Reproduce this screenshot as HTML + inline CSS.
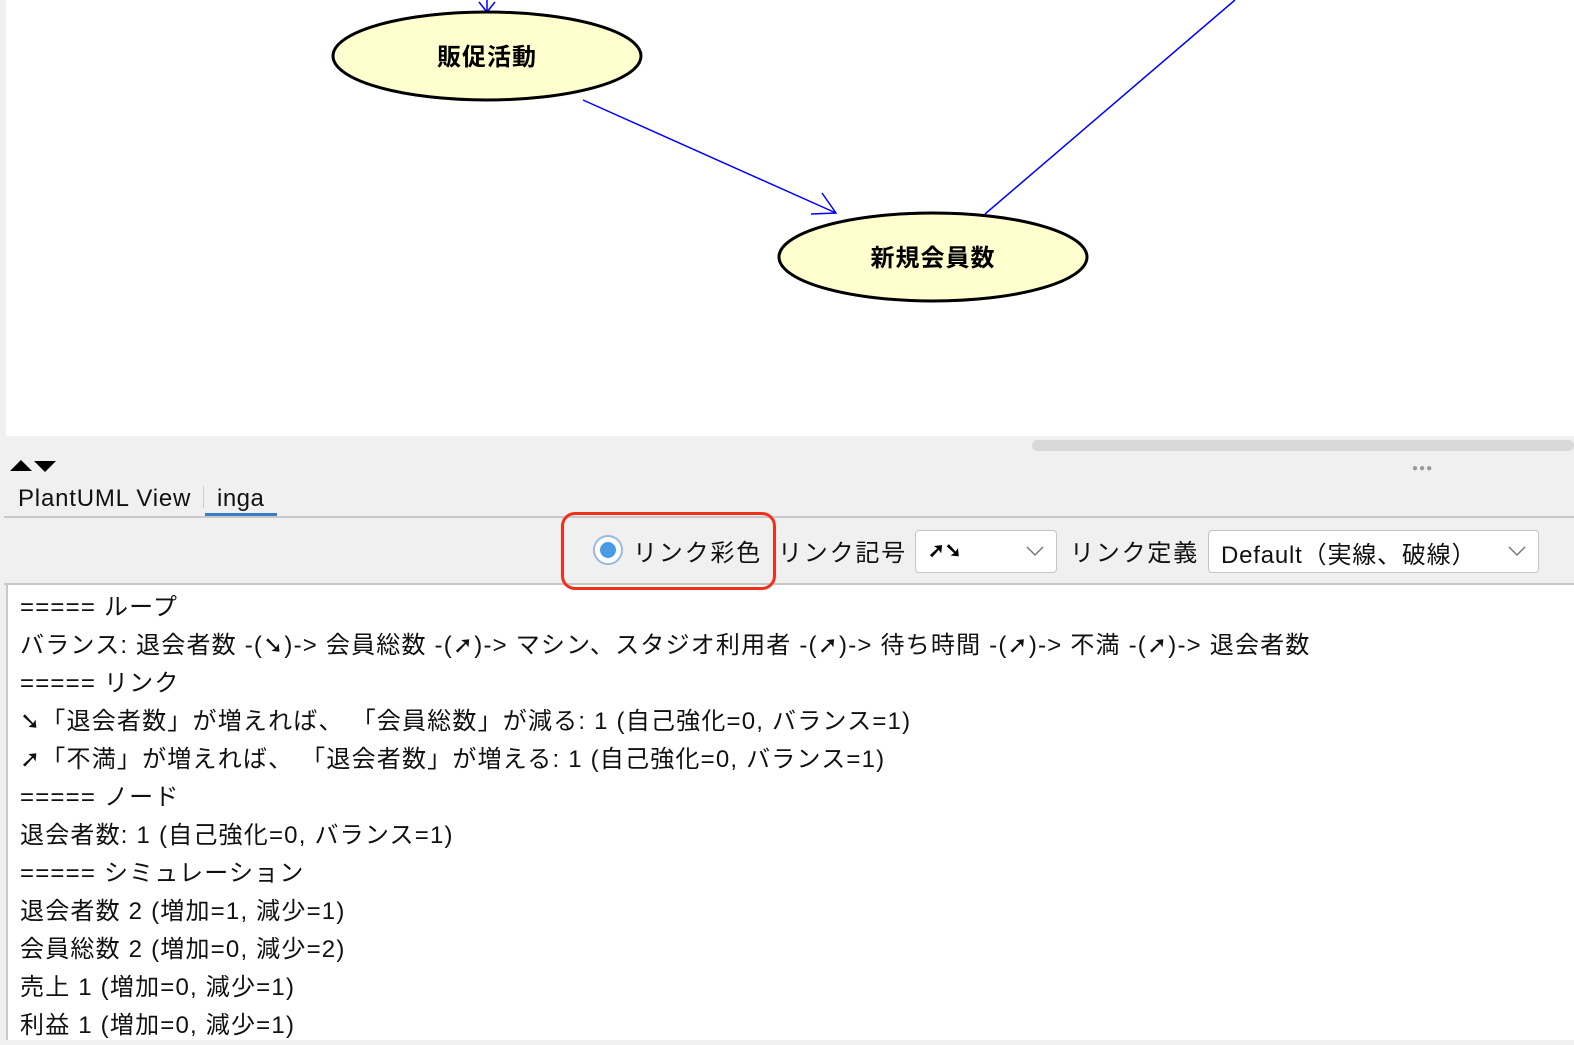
<!DOCTYPE html>
<html><head><meta charset="utf-8"><style>
body{margin:0;width:1574px;height:1040px;overflow:hidden;background:#f0f0f0;font-family:"Liberation Sans","Noto Sans CJK JP",sans-serif;position:relative}
.abs{position:absolute}
.txt{position:absolute;left:20px;font-size:24px;color:#111;white-space:nowrap;line-height:38px;letter-spacing:1.2px}
.lbl{letter-spacing:1.8px}
</style></head><body>
<div class="abs" style="left:6px;top:0;width:1568px;height:436px;background:#fff"></div>
<svg class="abs" style="left:0;top:0" width="1574" height="436">
<line x1="487" y1="0" x2="487" y2="12" stroke="#00f" stroke-width="1.5"/>
<path d="M479 2 L487 12 L495 2" fill="none" stroke="#00f" stroke-width="1.5"/>
<line x1="583" y1="100" x2="836" y2="213" stroke="#00f" stroke-width="1.5"/>
<path d="M822 193 L836 213 L811 214" fill="none" stroke="#00f" stroke-width="1.5"/>
<line x1="985" y1="214" x2="1235" y2="0" stroke="#00f" stroke-width="1.5"/>
<ellipse cx="487" cy="56" rx="154" ry="44" fill="#fefece" stroke="#000" stroke-width="3"/>
<text x="487" y="65" text-anchor="middle" font-size="24" font-weight="bold" letter-spacing="1" font-family="Liberation Sans,Noto Sans CJK JP,sans-serif">販促活動</text>
<ellipse cx="933" cy="257" rx="154" ry="44" fill="#fefece" stroke="#000" stroke-width="3"/>
<text x="933" y="266" text-anchor="middle" font-size="24" font-weight="bold" letter-spacing="1" font-family="Liberation Sans,Noto Sans CJK JP,sans-serif">新規会員数</text>
</svg>
<div class="abs" style="left:1032px;top:440px;width:542px;height:11px;border-radius:6px;background:#d9d9d9"></div>
<div class="abs" style="left:1412px;top:463px;font-size:10px;color:#999;letter-spacing:1px">●●●</div>
<svg class="abs" style="left:10px;top:460px" width="50" height="12"><path d="M0 11 L11 0 L22 11Z M24 1 L46 1 L35 12Z" fill="#000"/></svg>
<div class="abs" style="left:18px;top:485px;font-size:24px;color:#111;letter-spacing:0.8px">PlantUML View</div>
<div class="abs" style="left:203px;top:486px;width:1px;height:22px;background:#ccc"></div>
<div class="abs" style="left:217px;top:485px;font-size:24px;color:#111;letter-spacing:0.5px">inga</div>
<div class="abs" style="left:205px;top:513px;width:72px;height:5px;background:#3a7ec6"></div>
<div class="abs" style="left:4px;top:516px;width:1570px;height:2px;background:#c8c8c8"></div>
<div class="abs" style="left:593px;top:535px;width:30px;height:30px;border-radius:50%;background:#fff;border:2px solid #9ab8dc;box-sizing:border-box"></div>
<div class="abs" style="left:600px;top:542px;width:16px;height:16px;border-radius:50%;background:#4a9ae6"></div>
<div class="abs lbl" style="left:633px;top:533px;font-size:24px;color:#111">リンク彩色</div>
<div class="abs lbl" style="left:778px;top:533px;font-size:24px;color:#111">リンク記号</div>
<div class="abs" style="left:915px;top:530px;width:142px;height:43px;background:#fff;border:1px solid #c4c4c4;border-radius:4px;box-sizing:border-box"></div>
<div class="abs" style="left:928px;top:538px;font-size:20px;font-weight:bold">➚➘</div>
<svg class="abs" style="left:1026px;top:545px" width="18" height="12"><path d="M1 2 L9 10 L17 2" fill="none" stroke="#777" stroke-width="1.5"/></svg>
<div class="abs lbl" style="left:1070px;top:533px;font-size:24px;color:#111">リンク定義</div>
<div class="abs" style="left:1208px;top:530px;width:331px;height:43px;background:#fff;border:1px solid #c4c4c4;border-radius:4px;box-sizing:border-box"></div>
<div class="abs" style="left:1221px;top:535px;font-size:24px;color:#111;letter-spacing:0.8px">Default（実線、破線）</div>
<svg class="abs" style="left:1508px;top:545px" width="18" height="12"><path d="M1 2 L9 10 L17 2" fill="none" stroke="#777" stroke-width="1.5"/></svg>
<div class="abs" style="left:4px;top:583px;width:1570px;height:2px;background:#c8c8c8"></div>
<div class="abs" style="left:6px;top:585px;width:1568px;height:455px;background:#fff;border-left:2px solid #c8c8c8"></div>
<div class="abs" style="left:561px;top:512px;width:215px;height:78px;border:3px solid #f0301c;border-radius:14px;box-sizing:border-box;z-index:5"></div>
<div class="txt" style="top:589px">===== ループ</div>
<div class="txt" style="top:627px">バランス: 退会者数 -(➘)-&gt; 会員総数 -(➚)-&gt; マシン、スタジオ利用者 -(➚)-&gt; 待ち時間 -(➚)-&gt; 不満 -(➚)-&gt; 退会者数</div>
<div class="txt" style="top:665px">===== リンク</div>
<div class="txt" style="top:703px">➘「退会者数」が増えれば、 「会員総数」が減る: 1 (自己強化=0, バランス=1)</div>
<div class="txt" style="top:741px">➚「不満」が増えれば、 「退会者数」が増える: 1 (自己強化=0, バランス=1)</div>
<div class="txt" style="top:779px">===== ノード</div>
<div class="txt" style="top:817px">退会者数: 1 (自己強化=0, バランス=1)</div>
<div class="txt" style="top:855px">===== シミュレーション</div>
<div class="txt" style="top:893px">退会者数 2 (増加=1, 減少=1)</div>
<div class="txt" style="top:931px">会員総数 2 (増加=0, 減少=2)</div>
<div class="txt" style="top:969px">売上 1 (増加=0, 減少=1)</div>
<div class="txt" style="top:1007px">利益 1 (増加=0, 減少=1)</div>
</body></html>
